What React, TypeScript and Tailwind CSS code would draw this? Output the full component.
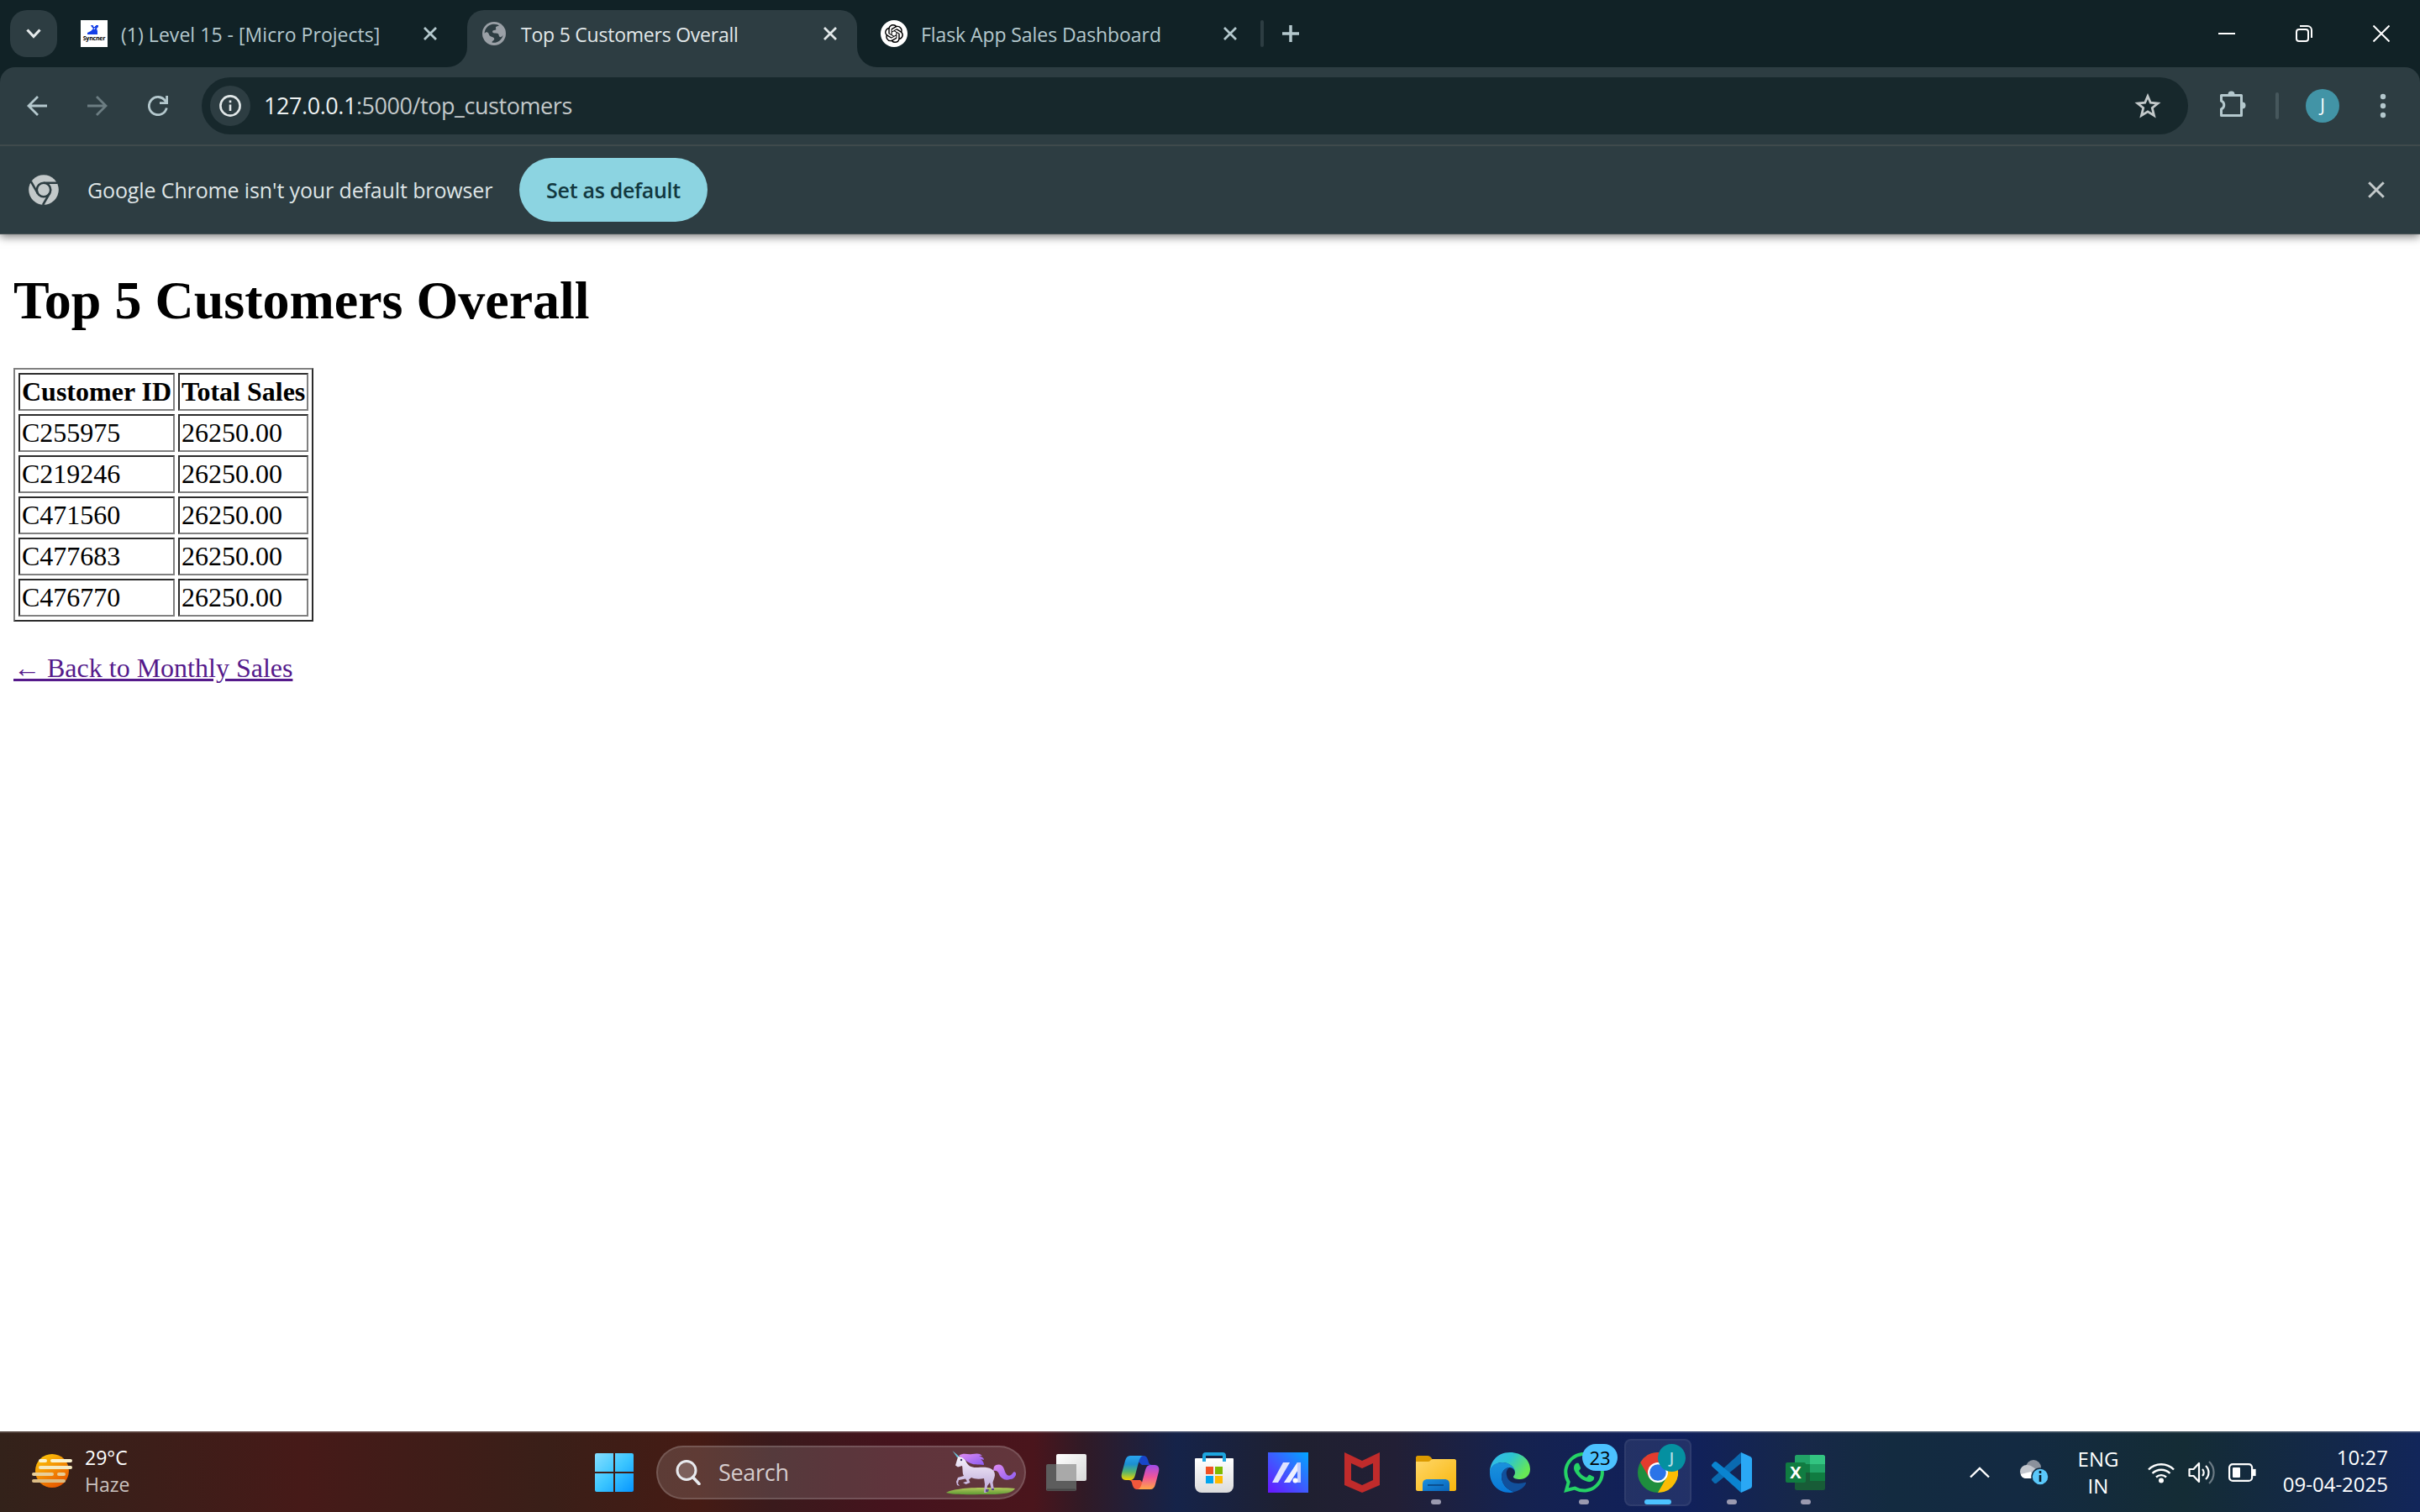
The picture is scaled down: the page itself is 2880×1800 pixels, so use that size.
import React from "react";
import { SiOpenai, SiWhatsapp } from "react-icons/si";

const UI = "font-['Open_Sans','Noto_Sans',sans-serif]";

const customers: [string, string][] = [
  ["C255975", "26250.00"],
  ["C219246", "26250.00"],
  ["C471560", "26250.00"],
  ["C477683", "26250.00"],
  ["C476770", "26250.00"],
];

function CloseGlyph({ size, width, color }: { size: number; width: number; color: string }) {
  return (
    <svg width={size} height={size} viewBox="0 0 16 16" fill="none" stroke={color} strokeWidth={width} className="shrink-0">
      <path d="M1 1 15 15M15 1 1 15" />
    </svg>
  );
}

function Globe() {
  return (
    <svg width="32" height="32" viewBox="0 0 32 32" className="shrink-0">
      <circle cx="16" cy="16" r="14" fill="#9aa0a6" />
      <path
        d="M14.5 4.8c3.4-.5 6 .4 7.4 1.6-1.500 1-3.400 .6-3.900 2-.4 1.400 1 2.200 0 3.200-1 .8-3.200 0-3.800 1.400-.5 1.200 .4 2.400 2.200 2.500 2.500 .1 4.200-.2 5 1.600 .5 1.300 .3 2.600 1.600 3 1.200 .3 2.600-.4 3.600-2.300-.9 4.600-4.400 8-9 8.900-1.500 .2-3 .1-4.200-.2.400-2 1.700-1.800 2.600-3.200 .8-1.500-.3-2.300-1.700-3.100-1.600-1-3.600-.8-4.200-2.700-.5-1.400-.8-2-1.500-2.700-1.300-1.200-3-.6-4 1C4.700 10 9 5.600 14.500 4.800Z"
        fill="#2d3d42"
      />
    </svg>
  );
}

function SyncFavicon() {
  return (
    <span className="relative flex h-8 w-8 shrink-0 items-end justify-center bg-white">
      <svg width="32" height="32" viewBox="0 0 32 32" className="absolute inset-0">
        <path d="M12 6h3l1 2 2-2h3v2l-2 2 1 3v4H8v-2l4-2 3-3-2-2Z" fill="#1540e8" />
        <path d="M15 6l1 2 2-2M17 9l-1 2" stroke="#fff" strokeWidth="1" fill="none" />
      </svg>
      <span className="relative pb-[6px] text-[7px] leading-[8px] font-bold tracking-[-0.2px] text-black">Syncner</span>
    </span>
  );
}

function TabStrip() {
  return (
    <div className="flex h-20 items-center bg-[#112226] pl-3">
      <div className="flex h-14 w-14 items-center justify-center rounded-[20px] bg-[#2d3d42]">
        <svg width="18" height="12" viewBox="0 0 18 12" fill="none" stroke="#e4e9ea" strokeWidth="3.200">
          <path d="M1.500 1.500 9 9.500 16.500 1.500" />
        </svg>
      </div>
      <div className="flex w-[488px] items-center pl-7">
        <SyncFavicon />
        <span className="w-[368px] pt-[2px] pl-4 text-[23px] tracking-[0.04px] text-[#b4c8cd]">(1) Level 15 - [Micro Projects]</span>
        <span className="pl-2">
          <CloseGlyph size={16} width={2.8} color="#b4c8cd" />
        </span>
      </div>
      <div className="relative mt-3 flex h-[68px] w-[464px] items-center rounded-t-[20px] bg-[#2d3d42] pb-3 pl-4">
        <svg width="24" height="24" viewBox="0 0 24 24" className="absolute bottom-0 -left-6">
          <path d="M24 0v24H0A24 24 0 0 0 24 0Z" fill="#2d3d42" />
        </svg>
        <svg width="24" height="24" viewBox="0 0 24 24" className="absolute -right-6 bottom-0">
          <path d="M0 0v24h24A24 24 0 0 1 0 0Z" fill="#2d3d42" />
        </svg>
        <Globe />
        <span className="w-[376px] pt-[2px] pl-4 text-[23px] tracking-[-0.23px] text-[#e2e8e9]">Top 5 Customers Overall</span>
        <CloseGlyph size={16} width={2.8} color="#e2e8e9" />
      </div>
      <div className="flex w-[480px] items-center pl-7">
        <span className="flex h-8 w-8 shrink-0 items-center justify-center rounded-full bg-white">
          <SiOpenai size={22} color="#000" />
        </span>
        <span className="w-[376px] pt-[2px] pl-4 text-[23px] tracking-[-0.08px] text-[#b4c8cd]">Flask App Sales Dashboard</span>
        <CloseGlyph size={16} width={2.8} color="#b4c8cd" />
      </div>
      <div className="h-8 w-1 rounded-full bg-[#2d3d42]" />
      <svg width="20" height="20" viewBox="0 0 20 20" className="ml-[22px]" stroke="#b4c8cd" strokeWidth="3.500">
        <path d="M10 0v20M0 10h20" />
      </svg>
      <div className="ml-auto flex items-center gap-[72px] pr-9">
        <svg width="20" height="20" viewBox="0 0 20 20" stroke="#fff" strokeWidth="2">
          <path d="M0 10h20" />
        </svg>
        <svg width="20" height="20" viewBox="0 0 20 20" fill="none" stroke="#fff" strokeWidth="2">
          <rect x="1" y="5" width="14" height="14" rx="3" />
          <path d="M5 1h9a5 5 0 0 1 5 5v9" />
        </svg>
        <svg width="20" height="20" viewBox="0 0 20 20" stroke="#fff" strokeWidth="2">
          <path d="M.5 .5 19.500 19.500M19.500 .5 .5 19.500" />
        </svg>
      </div>
    </div>
  );
}

function Toolbar() {
  return (
    <div className="relative z-10 bg-[#112226]">
      <div className="flex h-[94px] items-center rounded-t-[18px] border-b-2 border-[#3f4a4c] bg-[#2d3d42] pl-8">
        <svg width="24" height="24" viewBox="0 0 24 24" fill="none" stroke="#b4c8cd" strokeWidth="2.800">
          <path d="M24 12H2M13 1 2 12 13 23" />
        </svg>
        <svg width="24" height="24" viewBox="0 0 24 24" fill="none" stroke="#6c7d82" strokeWidth="2.800" className="ml-12">
          <path d="M0 12h22M11 1l11 11L11 23" />
        </svg>
        <svg width="24" height="24" viewBox="0 0 24 24" fill="none" stroke="#b4c8cd" strokeWidth="2.800" className="ml-12">
          <path d="M22.300 14.500A10.600 10.600 0 1 1 20.800 6.200L22.600 8.600" />
          <path d="M22.600 0v8.600H14" />
        </svg>
        <div className="ml-10 flex h-[68px] w-[2364px] items-center rounded-full bg-[#17282c] pr-8 pl-[10px]">
          <span className="flex h-12 w-12 items-center justify-center rounded-full bg-[#2d3d42]">
            <svg width="26" height="26" viewBox="0 0 26 26" fill="none" stroke="#e2e8e9" strokeWidth="2.600">
              <circle cx="13" cy="13" r="11.600" />
              <path d="M13 11.500v7.500M13 6.500v2.800" />
            </svg>
          </span>
          <span className="pl-[16px] text-[27px] tracking-[-0.44px] text-[#c3c9ca]">
            <span className="text-[#eef2f2]">127.0.0.1</span>:5000/top_customers
          </span>
          <svg width="32" height="30" viewBox="0 0 32 30" className="ml-auto" fill="none" stroke="#c3c9ca" strokeWidth="2.800">
            <path d="M16 3.500 19.300 11.200 28 12 21.300 17.500 23.500 26.500 16 21.800 8.500 26.500 10.700 17.500 4 12 12.700 11.200Z" />
          </svg>
        </div>
        <svg width="34" height="34" viewBox="0 0 34 34" className="mb-1 ml-[35px]">
          <path
            d="M4.500 6.500h24v24h-24v-7.500a5.300 5.300 0 0 0 0-9.800Z"
            fill="none"
            stroke="#b4c8cd"
            strokeWidth="3"
            strokeLinejoin="round"
          />
          <path d="M12.500 5.500a4 4 0 0 1 8 0Z M29.500 14.500a4 4 0 0 1 0 8Z" fill="#b4c8cd" />
        </svg>
        <div className="ml-[35px] h-8 w-1 rounded-full bg-[#46575c]" />
        <span className="ml-8 flex h-10 w-10 items-center justify-center rounded-full bg-[#4294a6] text-[21px] text-white">J</span>
        <svg width="8" height="32" viewBox="0 0 8 32" fill="#b4c8cd" className="ml-12">
          <circle cx="4" cy="5" r="3.200" />
          <circle cx="4" cy="16" r="3.200" />
          <circle cx="4" cy="27" r="3.200" />
        </svg>
      </div>
    </div>
  );
}

function InfoBar() {
  return (
    <div className="relative flex h-[105px] items-center border-b border-[#465154] bg-[#2d3d42] pl-[34px] shadow-[0_3px_10px_rgba(0,0,0,0.5)]">
      <svg width="36" height="36" viewBox="0 0 36 36">
        <circle cx="18" cy="18" r="17.800" fill="#c3c9ca" />
        <g fill="none" stroke="#2d3d42" strokeWidth="2.600">
          <circle cx="18" cy="18" r="8.200" />
          <path d="M18 9.800H34M10.900 22.100 2.900 8.200M25.100 22.100 17 36" />
        </g>
      </svg>
      <span className="w-[548px] pt-[2px] pl-[34px] text-[25px] tracking-[-0.13px] text-[#dfe5e6]">
        Google Chrome isn't your default browser
      </span>
      <span className="flex h-[76px] w-[224px] items-center justify-center rounded-full bg-[#8cd4e1] pt-[2px] text-[25px] font-semibold tracking-[-0.3px] text-[#12383f]">
        Set as default
      </span>
      <span className="mr-[42px] ml-auto">
        <CloseGlyph size={20} width={2.4} color="#c3c9ca" />
      </span>
    </div>
  );
}

function Page() {
  const cell =
    "h-[45px] border-2 border-t-[#2c2c2c] border-r-[#808080] border-b-[#808080] border-l-[#2c2c2c] p-[2px] leading-[37px] whitespace-nowrap";
  return (
    <main className="flex-1 bg-white px-4 pt-[42px] font-['Liberation_Serif',serif] text-[32px] leading-[37px] text-black">
      <h1 className="text-[64px] leading-[74px] font-bold">Top 5 Customers Overall</h1>
      <table className="mt-[43px] w-[357px] table-fixed border-separate border-spacing-1 border-2 border-t-[#808080] border-r-[#2c2c2c] border-b-[#2c2c2c] border-l-[#808080]">
        <thead>
          <tr>
            <th className={cell + " w-[186px] text-left"}>Customer ID</th>
            <th className={cell + " w-[155px] text-left"}>Total Sales</th>
          </tr>
        </thead>
        <tbody>
          {customers.map(([id, total]) => (
            <tr key={id}>
              <td className={cell}>{id}</td>
              <td className={cell}>{total}</td>
            </tr>
          ))}
        </tbody>
      </table>
      <p className="mt-[37px]">
        <a className="text-[#551a8b] underline">← Back to Monthly Sales</a>
      </p>
    </main>
  );
}

function Haze() {
  return (
    <svg width="48" height="40" viewBox="0 0 48 40">
      <defs>
        <linearGradient id="sun" x1="0" y1="0" x2=".6" y2="1">
          <stop offset="0" stopColor="#ffcf0a" />
          <stop offset="1" stopColor="#e85a00" />
        </linearGradient>
      </defs>
      <circle cx="24" cy="20" r="20" fill="url(#sun)" />
      <g strokeWidth="4" strokeLinecap="round">
        <path d="M10 8h6M24 8h22" stroke="#fbf3d0" />
        <path d="M10 16h36" stroke="#f6eac0" />
        <path d="M2 24h22M32 24h6" stroke="#e8cf9a" />
        <path d="M2 32h36" stroke="#dcbd85" />
      </g>
    </svg>
  );
}

function Unicorn() {
  return (
    <svg width="84" height="54" viewBox="0 0 84 54">
      <defs>
        <linearGradient id="uh" x1="0" y1="0" x2="0" y2="1">
          <stop offset="0" stopColor="#f7f2fb" />
          <stop offset="1" stopColor="#b9a3d6" />
        </linearGradient>
        <linearGradient id="um" x1="0" y1="0" x2="1" y2="1">
          <stop offset="0" stopColor="#e08cf2" />
          <stop offset="1" stopColor="#8b5cf0" />
        </linearGradient>
        <linearGradient id="ug" x1="0" y1="0" x2="0" y2="1">
          <stop offset="0" stopColor="#b5c95c" />
          <stop offset="1" stopColor="#5e9a34" />
        </linearGradient>
      </defs>
      <path d="M1 51c4-3 20-6 42-6s34 0 40 1c-3 5-12 7-30 7S8 54 1 51Z" fill="url(#ug)" />
      <path d="M8.500 1 16 7.500 17 9.500 14 9Z" fill="#6cc3d8" />
      <path d="M58 20c4-4 10-3 12 3 2 7 5 9 8 7 2-1 2-3 4-4 2 1 3 2 2 4-2 4-4 5-7 5-6 2-11-1-13-6-1-3-3-5-7-4Z" fill="url(#um)" />
      <path
        d="M15 8.500c4-1 7 0 9 4 3 7 7 9 15 8.500 10-1 20 0 20 9-.5 4-2 6-2.500 9l1.500 9h-3l-2-9-3 4-1 8h-3l1-10-1-7c-5 1-11 1-15-1l-3 2.500 1.500 3.500-5 2-3.500-2 5-1.500-2-3-8 1.500-1 4 2 3-3-1-1-4 2-5 7-2c-2-3-1-8-2-12l-5 1.500-3-2Z"
        fill="url(#uh)"
      />
      <path d="M16 7c6-4 10-1 16-2 6-1 9-1 12 2l-4 0c4 1 6 3 6 5l-4-1c3 2 4 5 4 7-8-1-12 1-20-4-3-3-6-5-10-7Z" fill="url(#um)" />
      <circle cx="19" cy="12" r="1.200" fill="#3a3560" />
      <path d="M48 47h4l-1 3h-3zM55 46h3v2h-3z" fill="#5b4a86" />
    </svg>
  );
}

function TaskView() {
  return (
    <svg width="48" height="48" viewBox="0 0 48 48">
      <defs>
        <linearGradient id="tv" x1="0" y1="0" x2="1" y2="1">
          <stop offset="0" stopColor="#fff" />
          <stop offset="1" stopColor="#d8d8d8" />
        </linearGradient>
      </defs>
      <rect x="12" y="2" width="36" height="32" rx="2" fill="url(#tv)" />
      <rect x="0" y="14" width="36" height="32" rx="2" fill="#5d5d5d" />
      <path d="M12 14h24v20H12z" fill="#a9a9a9" />
      <path d="M1 44.500h34" stroke="#454545" strokeWidth="2" />
    </svg>
  );
}

function Copilot() {
  return (
    <svg width="48" height="48" viewBox="0 0 48 48">
      <defs>
        <linearGradient id="cpa" x1="0" y1="0" x2="0" y2="1">
          <stop offset="0" stopColor="#2aa5f0" />
          <stop offset=".35" stopColor="#1c8fd0" />
          <stop offset=".65" stopColor="#52b470" />
          <stop offset="1" stopColor="#f2d400" />
        </linearGradient>
        <linearGradient id="cpb" x1="0" y1="0" x2="0" y2="1">
          <stop offset="0" stopColor="#a04be8" />
          <stop offset=".5" stopColor="#f0559a" />
          <stop offset="1" stopColor="#ffa646" />
        </linearGradient>
      </defs>
      <path d="M14 4h14c4 0 5 4 6 8 .6 2 2 3 4 3H26Z" fill="#1746c8" />
      <path d="M34 44H20c-4 0-5-4-6-8-.6-2-2-3-4-3h14Z" fill="#f0573c" />
      <path d="M12 4h15c-3 1-4 4-5 8l-4 15c-1 4-3 6-6 6H7c-5 0-6-4-5-8L6 10c1-4 3-6 6-6Z" fill="url(#cpa)" />
      <path d="M36 44H21c3-1 4-4 5-8l4-15c1-4 3-6 6-6h5c5 0 6 4 5 8l-4 15c-1 4-3 6-6 6Z" fill="url(#cpb)" />
    </svg>
  );
}

function Store() {
  return (
    <svg width="48" height="48" viewBox="0 0 48 48">
      <defs>
        <linearGradient id="st" x1="0" y1="0" x2="0" y2="1">
          <stop offset="0" stopColor="#fff" />
          <stop offset="1" stopColor="#dcdcdc" />
        </linearGradient>
      </defs>
      <path d="M2 7h44a1 1 0 0 1 1 1v32a8 8 0 0 1-8 8H9a8 8 0 0 1-8-8V8a1 1 0 0 1 1-1Z" fill="url(#st)" />
      <path d="M12 11V4a2 2 0 0 1 2-2h20a2 2 0 0 1 2 2v7" fill="none" stroke="#1da6e0" strokeWidth="4" />
      <path d="M14 17h9v9h-9z" fill="#f25022" />
      <path d="M25 17h9v9h-9z" fill="#7fba00" />
      <path d="M14 28h9v9h-9z" fill="#00a4ef" />
      <path d="M25 28h9v9h-9z" fill="#ffb900" />
    </svg>
  );
}

function Asus() {
  return (
    <svg width="48" height="48" viewBox="0 0 48 48">
      <defs>
        <linearGradient id="as" x1="1" y1="0" x2="0" y2="1">
          <stop offset="0" stopColor="#00a8ff" />
          <stop offset=".5" stopColor="#3d5cff" />
          <stop offset="1" stopColor="#6a14ff" />
        </linearGradient>
      </defs>
      <path d="M0 0h48v48H0z" fill="url(#as)" />
      <path d="M18 12h8L12 36H5Z" fill="#dfe3ff" />
      <path d="M35 12h4v24h-4V22l-9 14h-7Z" fill="#c5cfff" />
      <path d="M35 12v10l-9 14h-7Z" fill="#eef0ff" />
      <circle cx="32.500" cy="33.500" r="3" fill="#fff" />
    </svg>
  );
}

function McAfee() {
  return (
    <svg width="48" height="48" viewBox="0 0 48 48">
      <path fillRule="evenodd" d="M3 0 24 10 45 0v39L24 48 3 39ZM11 13v20l13 6 13-6V13l-13 6Z" fill="#c02b2b" />
    </svg>
  );
}

function Folder() {
  return (
    <svg width="48" height="48" viewBox="0 0 48 48">
      <defs>
        <linearGradient id="fo" x1="0" y1="0" x2="1" y2="1">
          <stop offset="0" stopColor="#ffd768" />
          <stop offset="1" stopColor="#f8b60c" />
        </linearGradient>
        <linearGradient id="fb" x1="0" y1="0" x2="1" y2="1">
          <stop offset="0" stopColor="#1a90e0" />
          <stop offset="1" stopColor="#0a63b8" />
        </linearGradient>
      </defs>
      <path d="M2 4h12c2 0 3 1 4 2l3 4v4H0V6c0-1 1-2 2-2Z" fill="#dc9a00" />
      <path d="M0 11h15c2 0 3-3 5-3h26c1 0 2 1 2 2v34c0 1-1 2-2 2H2c-1 0-2-1-2-2Z" fill="url(#fo)" />
      <path d="M8 46V38c0-4 2-6 6-6h20c4 0 6 2 6 6v8Z" fill="url(#fb)" />
      <path d="M14 39h19" stroke="#0a4f90" strokeWidth="2" />
    </svg>
  );
}

function Edge() {
  return (
    <svg width="48" height="48" viewBox="0 0 48 48">
      <defs>
        <linearGradient id="ea" x1="0" y1="0" x2="1" y2=".5">
          <stop offset="0" stopColor="#35b8f4" />
          <stop offset=".5" stopColor="#2cc4d0" />
          <stop offset="1" stopColor="#66e855" />
        </linearGradient>
        <linearGradient id="eb" x1="0" y1="0" x2="0" y2="1">
          <stop offset="0" stopColor="#1a92dc" />
          <stop offset="1" stopColor="#0878d8" />
        </linearGradient>
      </defs>
      <path d="M0 24C0 10 10 0 24 0s24 9 24 20c0 8-6 12-12 12-5 0-8-1-8-3 0-1 2-2 2-5 0-6-7-12-15-12C6 12 1 19 0 24Z" fill="url(#ea)" />
      <path d="M0 24c0-7 6-12 15-12 9 0 15 6 15 12 0-3-3-6-6-6-6 0-10 5-10 11 0 9 7 16 15 18-2 .7-4 1-5 1C10 48 0 38 0 24Z" fill="url(#eb)" />
      <path d="M14 29c0-6 4-11 9-11-3 3-4 6-3 9 1 7 7 10 14 10 5 0 8-2 9-1 1 1-4 9-14 11-8-2-15-9-15-18Z" fill="#11509c" />
    </svg>
  );
}

function Chrome() {
  return (
    <svg width="48" height="48" viewBox="0 0 48 48">
      <circle cx="24" cy="24" r="24" fill="#1e8e3e" />
      <path d="M24 12H44.800A24 24 0 0 1 24 48L34.400 30Z" fill="#fbbc04" />
      <path d="M3.200 12A24 24 0 0 1 44.800 12H24L13.600 30Z" fill="#e33b2e" />
      <circle cx="24" cy="24" r="12" fill="#fff" />
      <circle cx="24" cy="24" r="9.800" fill="#2a74e8" />
    </svg>
  );
}

function VsCode() {
  return (
    <svg width="48" height="48" viewBox="0 0 48 48">
      <path d="M35 0v13L6 36.500c-1 .7-2 .7-3 0L.7 34c-1-1-1-2 0-3Z" fill="#0a6ab0" />
      <path d="M35 48V35L6 11.500c-1-.7-2-.7-3 0L.7 14c-1 1-1 2 0 3Z" fill="#0a84d0" />
      <path d="M35 0 46 5c1 .5 2 1.500 2 3v32c0 1.500-1 2.500-2 3L35 48Z" fill="#2aa8f5" />
    </svg>
  );
}

function Excel() {
  return (
    <span className="relative block h-12 w-12">
      <svg width="48" height="48" viewBox="0 0 48 48">
        <path d="M13 3h16v11H11V5c0-1 1-2 2-2Z" fill="#21a366" />
        <path d="M29 3h16c1 0 2 1 2 2v9H29Z" fill="#33c481" />
        <path d="M11 14h18v11H11Z" fill="#107c41" />
        <path d="M29 14h18v10H29Z" fill="#21a366" />
        <path d="M11 24h18v11H11Z" fill="#185c37" />
        <path d="M29 24h18v11H29Z" fill="#107c41" />
        <path d="M11 34h36v9c0 1-1 2-2 2H13c-1 0-2-1-2-2Z" fill="#185c37" />
        <rect x="0" y="12" width="24" height="24" rx="2" fill="#107c41" />
      </svg>
      <span className="absolute top-3 left-0 w-6 text-center text-[20px] leading-6 font-bold text-white">X</span>
    </span>
  );
}

function Slot({ children, mark = false, active = false }: { children: React.ReactNode; mark?: boolean; active?: boolean }) {
  return (
    <div className="flex w-[88px] justify-center">
      <div className={active ? "relative h-20 w-20 rounded-lg border-2 border-white/5 bg-white/8" : "relative h-20 w-20 border-2 border-transparent"}>
        <div className="flex h-[76px] items-center justify-center">{children}</div>
        {mark && <span className="absolute bottom-0 left-8 h-[6px] w-3 rounded-full bg-[#9a9ab0]" />}
        {active && <span className="absolute bottom-0 left-[22px] h-[6px] w-8 rounded-full bg-[#4cc2ff]" />}
      </div>
    </div>
  );
}

function Taskbar() {
  return (
    <div className="flex h-24 items-center border-t-2 border-white/15 bg-[linear-gradient(90deg,#33221a_0px,#461a18_360px,#3a1f18_650px,#451b14_830px,#3a1a1c_920px,#45131d_1060px,#4a151c_1230px,#301a26_1290px,#152349_1400px,#1f2030_1540px,#221f35_1660px,#15224f_1800px,#10205c_2000px,#172848_2150px,#132b40_2250px,#132a42_2400px,#142c35_2600px,#13284a_2780px,#12265a_2880px)] bg-origin-border text-[24px] leading-8 text-white">
      <div className="flex w-[708px] items-center pb-1 pl-[38px]">
        <Haze />
        <div className="pl-[15px] text-[23px]">
          <div>29°C</div>
          <div className="text-[#c9c1bf]">Haze</div>
        </div>
      </div>
      <svg width="46" height="46" viewBox="0 0 46 46">
        <defs>
          <linearGradient id="win" x1="0" y1="0" x2="1" y2="1">
            <stop offset="0" stopColor="#86deff" />
            <stop offset=".5" stopColor="#3cc6ff" />
            <stop offset="1" stopColor="#0695ff" />
          </linearGradient>
        </defs>
        <path d="M2 0h20v22H0V2Q0 0 2 0ZM24 0h20q2 0 2 2v20H24ZM0 24h22v22H2q-2 0-2-2ZM24 24h22v20q0 2-2 2H24Z" fill="url(#win)" />
      </svg>
      <div className="ml-[27px] flex h-16 w-[440px] items-center rounded-full border-2 border-white/15 bg-white/14 pr-[10px] pl-[21px]">
        <svg width="30" height="30" viewBox="0 0 30 30" fill="none" stroke="#e8eaee" strokeWidth="3">
          <circle cx="13" cy="12.500" r="11" fill="#ffffff30" />
          <path d="M20.500 20.500 28 28.500" strokeWidth="3.600" strokeLinecap="round" />
        </svg>
        <span className="pl-[21px] text-[27px] tracking-[-0.3px] text-[#d5cccd]">Search</span>
        <span className="ml-auto">
          <Unicorn />
        </span>
      </div>
      <div className="ml-1 flex">
        <Slot><TaskView /></Slot>
        <Slot><Copilot /></Slot>
        <Slot><Store /></Slot>
        <Slot><Asus /></Slot>
        <Slot><McAfee /></Slot>
        <Slot mark><Folder /></Slot>
        <Slot><Edge /></Slot>
        <Slot mark>
          <SiWhatsapp size={48} color="#25d366" />
          <span className="absolute top-1 left-9 h-8 w-[42px] rounded-full bg-[#4cc2ff] text-center text-[22px] leading-[32px] text-black">23</span>
        </Slot>
        <Slot active>
          <Chrome />
          <span className="absolute top-1 left-[38px] h-[33px] w-[33px] rounded-full bg-[#0590a0] text-center text-[18px] leading-[32px] font-semibold text-[#b5dfe4]">J</span>
        </Slot>
        <Slot mark><VsCode /></Slot>
        <Slot mark><Excel /></Slot>
      </div>
      <svg width="24" height="14" viewBox="0 0 24 14" fill="none" stroke="#fff" strokeWidth="2.400" className="ml-[151px]">
        <path d="M1 12.500 12 1.800 23 12.500" />
      </svg>
      <svg width="34" height="32" viewBox="0 0 34 32" className="ml-9">
        <circle cx="16" cy="10" r="9" fill="#8b919c" />
        <path d="M8 7c5 0 8 3 12 6l8 1v9H8A8 8 0 0 1 8 7Z" fill="#c3c7ce" />
        <path d="M1 18l12-3 4 8H8c-4 0-7-2-7-5Z" fill="#fff" />
        <circle cx="24" cy="21" r="10" fill="#5ac8fa" stroke="#132b42" strokeWidth="1.500" />
        <path d="M24 19v8M24 14v3" stroke="#0b1b2a" strokeWidth="2.600" />
      </svg>
      <div className="ml-[26px] w-[66px] text-center">
        <div>ENG</div>
        <div>IN</div>
      </div>
      <svg width="32" height="26" viewBox="0 0 32 26" fill="none" stroke="#fff" strokeWidth="2.400" className="ml-[26px]">
        <path d="M1 9.500a21 21 0 0 1 30 0M5.500 14a15 15 0 0 1 21 0M10 18.500a8.800 8.800 0 0 1 12 0" />
        <circle cx="16" cy="22.500" r="3" fill="#fff" stroke="none" />
      </svg>
      <svg width="32" height="30" viewBox="0 0 32 30" fill="none" stroke="#fff" strokeWidth="2.200" className="ml-4">
        <path d="M1.500 11h5L13 4v22L6.500 19h-5Z" strokeLinejoin="round" />
        <path d="M17 11a5.500 5.500 0 0 1 0 8M21 7a11 11 0 0 1 0 16" />
        <path d="M25 2a18 18 0 0 1 0 26" stroke="#6b7a84" />
      </svg>
      <svg width="33" height="22" viewBox="0 0 33 22" fill="none" stroke="#fff" strokeWidth="2.200" className="ml-4">
        <rect x="1.100" y="1.100" width="27" height="19.800" rx="4" />
        <rect x="5" y="5" width="9" height="12" rx="1" fill="#fff" stroke="none" />
        <path d="M30 8v6h1.500V8Z" fill="#fff" />
      </svg>
      <div className="mr-[38px] ml-auto pb-1 text-right">
        <div>10:27</div>
        <div>09-04-2025</div>
      </div>
    </div>
  );
}

export default function App() {
  return (
    <div className={"flex h-[1800px] w-[2880px] flex-col overflow-hidden bg-white " + UI}>
      <TabStrip />
      <Toolbar />
      <InfoBar />
      <Page />
      <Taskbar />
    </div>
  );
}
